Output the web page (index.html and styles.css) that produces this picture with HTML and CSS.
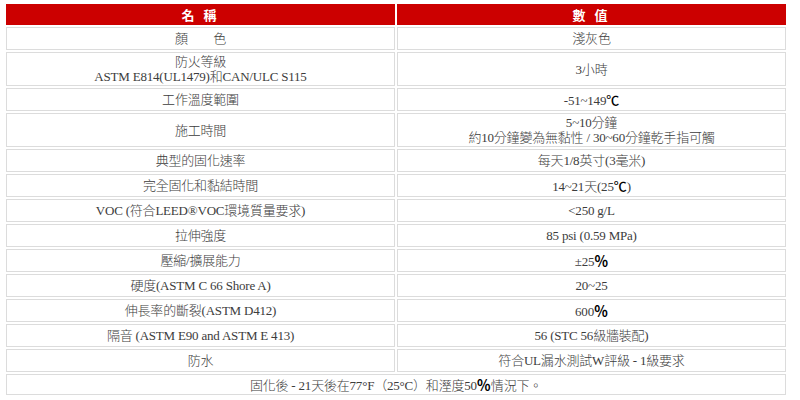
FILE: index.html
```html
<!DOCTYPE html>
<html lang="zh-Hant">
<head>
<meta charset="utf-8">
<title>規格</title>
<link rel="stylesheet" href="styles.css">
</head>
<body>
<table class="spec">
  <tr class="head">
    <td>名 稱</td>
    <td>數 值</td>
  </tr>
  <tr><td>顏&emsp;&emsp;色</td><td>淺灰色</td></tr>
  <tr><td>防火等級<br>ASTM E814(UL1479)和CAN/ULC S115</td><td>3小時</td></tr>
  <tr><td>工作溫度範圍</td><td>-51~149<span class="sym">℃</span></td></tr>
  <tr><td>施工時間</td><td>5~10分鐘<br>約10分鐘變為無黏性 / 30~60分鐘乾手指可觸</td></tr>
  <tr><td>典型的固化速率</td><td>每天1/8英寸(3毫米)</td></tr>
  <tr><td>完全固化和黏結時間</td><td>14~21天(25<span class="sym">℃</span>)</td></tr>
  <tr><td>VOC (符合LEED®VOC環境質量要求)</td><td>&lt;250 g/L</td></tr>
  <tr><td>拉伸強度</td><td>85 psi (0.59 MPa)</td></tr>
  <tr><td>壓縮/擴展能力</td><td>±25<span class="sym pct">％</span></td></tr>
  <tr><td>硬度(ASTM C 66 Shore A)</td><td>20~25</td></tr>
  <tr><td>伸長率的斷裂(ASTM D412)</td><td>600<span class="sym pct">％</span></td></tr>
  <tr><td>隔音 (ASTM E90 and ASTM E 413)</td><td>56 (STC 56級牆裝配)</td></tr>
  <tr><td>防水</td><td>符合UL漏水測試W評級 - 1級要求</td></tr>
  <tr class="foot"><td colspan="2">固化後 - 21天後在77°F（25°C）和溼度50<span class="sym pct">％</span>情況下。</td></tr>
</table>
</body>
</html>
```

FILE: styles.css
```css
html, body {
  margin: 0;
  padding: 0;
  background: #ffffff;
}

body {
  padding: 2px 4px;
  font-family: "Liberation Serif", "Noto Sans CJK TC", serif;
  font-size: 13px;
  font-weight: 300;
  color: #3c3c3c;
}

.spec {
  width: 784px;
  border-collapse: separate;
  border-spacing: 2px;
  table-layout: fixed;
}

.spec td {
  width: 50%;
  height: 19px;
  padding: 1px 2px;
  line-height: 15px;
  text-align: center;
  vertical-align: middle;
  border: 1px solid #dcdcdc;
  background: #ffffff;
  letter-spacing: -0.2px;
}

.spec .head td {
  height: 21px;
  padding: 0;
  border: none;
  background: #cc0000;
  color: #ffffff;
  font-family: "Noto Sans CJK TC", "Noto Sans", sans-serif;
  font-weight: bold;
  font-size: 13px;
  letter-spacing: 3px;
  line-height: 21px;
}

.spec .foot td {
  height: 17px;
}

.sym {
  font-family: "Noto Sans CJK TC", sans-serif;
  color: #000000;
  font-weight: 500;
  letter-spacing: 0;
}

.pct {
  font-size: 14px;
  font-weight: bold;
}
```
